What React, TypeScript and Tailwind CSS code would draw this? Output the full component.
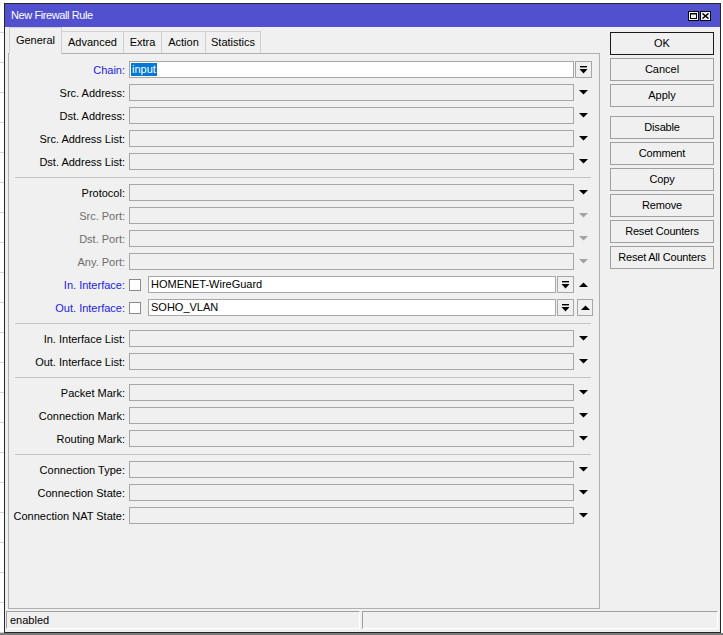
import React from 'react';

type Kind = 'plain' | 'chain' | 'in' | 'out';

interface Row {
  label: string;
  tone?: 'blue' | 'gray';
  kind?: Kind;
  value?: string;
}

const groups: Row[][] = [
  [
    { label: 'Chain:', tone: 'blue', kind: 'chain', value: 'input' },
    { label: 'Src. Address:' },
    { label: 'Dst. Address:' },
    { label: 'Src. Address List:' },
    { label: 'Dst. Address List:' },
  ],
  [
    { label: 'Protocol:' },
    { label: 'Src. Port:', tone: 'gray' },
    { label: 'Dst. Port:', tone: 'gray' },
    { label: 'Any. Port:', tone: 'gray' },
    { label: 'In. Interface:', tone: 'blue', kind: 'in', value: 'HOMENET-WireGuard' },
    { label: 'Out. Interface:', tone: 'blue', kind: 'out', value: 'SOHO_VLAN' },
  ],
  [{ label: 'In. Interface List:' }, { label: 'Out. Interface List:' }],
  [{ label: 'Packet Mark:' }, { label: 'Connection Mark:' }, { label: 'Routing Mark:' }],
  [
    { label: 'Connection Type:' },
    { label: 'Connection State:' },
    { label: 'Connection NAT State:' },
  ],
];

const tabs = ['General', 'Advanced', 'Extra', 'Action', 'Statistics'];
const tabWidths: Record<string, string> = {
  General: 'w-[53px]',
  Advanced: 'w-[62px]',
  Extra: 'w-[38px]',
  Action: 'w-[44px]',
  Statistics: 'w-[55px]',
};

const buttons = ['Disable', 'Comment', 'Copy', 'Remove', 'Reset Counters', 'Reset All Counters'];

const ArrowDown = ({ gray }: { gray?: boolean }) => (
  <svg width="9" height="5" viewBox="0 0 9 5">
    <polygon points="0,0 9,0 4.5,4.5" fill={gray ? '#a3a3a3' : '#000'} />
  </svg>
);

const ArrowUp = () => (
  <svg width="9" height="5" viewBox="0 0 9 5">
    <polygon points="0,5 9,5 4.5,0.5" fill="#000" />
  </svg>
);

// bar with triangle under it, the "pick from list" button
const DropIcon = () => (
  <svg width="9" height="8" viewBox="0 0 9 8">
    <rect x="1" y="0" width="7" height="1.4" fill="#000" />
    <polygon points="0.5,3 8.5,3 4.5,7.5" fill="#000" />
  </svg>
);

const FieldRow = ({ row }: { row: Row }) => {
  const kind = row.kind ?? 'plain';
  const disabled = row.tone === 'gray';
  const labelColor =
    row.tone === 'blue' ? 'text-[#1c1ce6]' : row.tone === 'gray' ? 'text-[#6d6d6d]' : 'text-black';

  return (
    <div className="flex h-[17px] items-center">
      <div className={`w-[117px] whitespace-nowrap pr-px pt-px text-right ${labelColor}`}>{row.label}</div>

      {kind === 'plain' && (
        <>
          <div className="ml-[3px] h-[17px] w-[445px] border border-[#a7a7a7] bg-[#f0f0f0]" />
          <div className="flex w-[19px] justify-center">
            <ArrowDown gray={disabled} />
          </div>
        </>
      )}

      {kind === 'chain' && (
        <>
          <div className="ml-[3px] flex h-[17px] w-[445px] items-center border border-[#a7a7a7] bg-white pl-px">
            <span className="bg-[#0078d7] px-px leading-[13px] text-white">{row.value}</span>
          </div>
          <div className="ml-px flex h-[17px] w-[17px] items-center justify-center border border-[#a7a7a7] bg-[#f0f0f0]">
            <DropIcon />
          </div>
        </>
      )}

      {(kind === 'in' || kind === 'out') && (
        <>
          <div className="ml-[3px] h-[12px] w-[12px] border border-[#8a8a8a] bg-white" />
          <div className="ml-[7px] flex h-[17px] w-[408px] items-center border border-[#a7a7a7] bg-white pl-[2px]">
            {row.value}
          </div>
          <div className="ml-px flex h-[17px] w-[17px] items-center justify-center border border-[#a7a7a7] bg-[#f0f0f0]">
            <DropIcon />
          </div>
          {kind === 'in' ? (
            <div className="flex w-[19px] justify-center">
              <ArrowUp />
            </div>
          ) : (
            <div className="ml-[3px] flex h-[17px] w-[16px] items-center justify-center border border-[#a7a7a7] bg-[#f0f0f0]">
              <ArrowUp />
            </div>
          )}
        </>
      )}
    </div>
  );
};

const Separator = () => <div className="mb-[6px] ml-[6px] mt-[7px] h-px w-[576px] bg-[#c4c4c4]" />;

export default function App() {
  return (
    <div className="flex h-[635px] w-[723px] flex-col overflow-hidden bg-white font-['Liberation_Sans',Arial,sans-serif] text-[11px] text-black">
      <div className="h-[3px]" />
      <div className="flex h-[630px]">
        {/* bit of the window behind */}
        <div className="w-[4px] bg-[repeating-linear-gradient(to_bottom,transparent_0,transparent_29px,#d4d4d4_29px,#d4d4d4_30px)]" />

        {/* dialog */}
        <div className="flex w-[717px] flex-col border border-[#262626] bg-[#f0f0f0]">
          {/* title bar */}
          <div className="flex h-[23px] items-center bg-[#5151d0] pl-[6px]">
            <span className="tracking-[-0.4px] text-white">New Firewall Rule</span>
            <div className="ml-auto mr-[9px] flex gap-px">
              <div className="flex h-[10px] w-[11px] items-center justify-center border border-black bg-[#f0f0f0]">
                <svg width="7" height="6" viewBox="0 0 7 6">
                  <rect x="0.5" y="0.5" width="6" height="5" fill="none" stroke="#000" />
                  <rect x="0" y="0" width="7" height="1.5" fill="#000" />
                </svg>
              </div>
              <div className="flex h-[10px] w-[11px] items-center justify-center border border-black bg-[#f0f0f0]">
                <svg width="7" height="6" viewBox="0 0 7 6">
                  <path d="M0.5 0.5 L6.5 5.5 M6.5 0.5 L0.5 5.5" stroke="#000" strokeWidth="1.5" />
                </svg>
              </div>
            </div>
          </div>

          {/* body */}
          <div className="flex h-[582px]">
            <div className="ml-[3px] flex w-[592px] flex-col">
              <div className="flex h-[26px] items-end pl-px">
                {tabs.map((t) =>
                  t === 'General' ? (
                    <div
                      key={t}
                      className={`relative z-10 -mb-px flex h-[27px] ${tabWidths[t]} items-center justify-center border border-b-0 border-[#d0d0d0] bg-[#f0f0f0] pb-[2px]`}
                    >
                      {t}
                    </div>
                  ) : (
                    <div
                      key={t}
                      className={`flex h-[22px] ${tabWidths[t]} items-center justify-center border border-b-0 border-l-0 border-[#d0d0d0] bg-[#f0f0f0]`}
                    >
                      {t}
                    </div>
                  )
                )}
              </div>

              <div className="flex-1 border border-[#b0b0b0] pt-[7px]">
                {groups.map((g, gi) => (
                  <React.Fragment key={gi}>
                    {gi > 0 && <Separator />}
                    <div className="flex flex-col gap-[6px]">
                      {g.map((r) => (
                        <FieldRow key={r.label} row={r} />
                      ))}
                    </div>
                  </React.Fragment>
                ))}
              </div>
            </div>

            {/* right buttons */}
            <div className="ml-[10px] flex w-[104px] flex-col pt-[5px]">
              <div className="flex flex-col gap-[3px]">
                <div className="flex h-[23px] items-center justify-center border border-[#1a1a1a] bg-[#f0f0f0]">OK</div>
                <div className="flex h-[23px] items-center justify-center border border-[#a0a0a0] bg-[#f0f0f0]">Cancel</div>
                <div className="flex h-[23px] items-center justify-center border border-[#a0a0a0] bg-[#f0f0f0]">Apply</div>
              </div>
              <div className="mt-[9px] flex flex-col gap-[3px]">
                {buttons.map((b) => (
                  <div key={b} className="flex h-[23px] items-center justify-center whitespace-nowrap border border-[#a0a0a0] bg-[#f0f0f0] tracking-[-0.2px]">
                    {b}
                  </div>
                ))}
              </div>
            </div>
          </div>

          {/* status bar */}
          <div className="mt-[2px] flex h-[18px]">
            <div className="ml-px flex w-[354px] items-center border border-b-white border-l-[#a0a0a0] border-r-white border-t-[#a0a0a0] pl-[3px]">
              enabled
            </div>
            <div className="ml-[2px] w-[356px] border border-b-white border-l-[#a0a0a0] border-r-white border-t-[#a0a0a0]" />
          </div>
        </div>

        <div className="flex-1" />
      </div>
      <div className="h-[2px] bg-[#7a7a7a]" />
    </div>
  );
}
